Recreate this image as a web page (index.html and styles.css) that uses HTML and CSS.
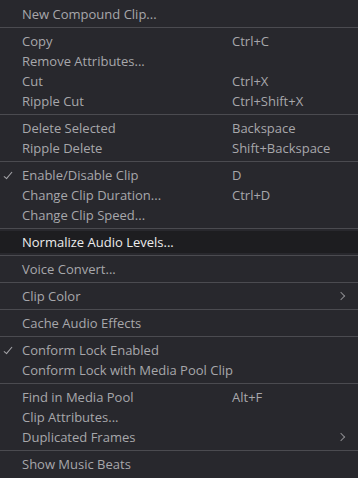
FILE: index.html
```html
<!DOCTYPE html>
<html lang="en">

<head>
    <meta charset="UTF-8">
    <meta name="viewport" content="width=device-width, initial-scale=1.0">
    <title>Clip Menu</title>
    <link rel="stylesheet" href="styles.css">
</head>

<body>
    <div class="menu">
        <div class="item"><span class="label">New Compound Clip...</span></div>
        <div class="sep"></div>
        <div class="item"><span class="label">Copy</span><span class="key">Ctrl+C</span></div>
        <div class="item"><span class="label">Remove Attributes...</span></div>
        <div class="item"><span class="label">Cut</span><span class="key">Ctrl+X</span></div>
        <div class="item"><span class="label">Ripple Cut</span><span class="key">Ctrl+Shift+X</span></div>
        <div class="sep"></div>
        <div class="item"><span class="label">Delete Selected</span><span class="key">Backspace</span></div>
        <div class="item"><span class="label">Ripple Delete</span><span class="key">Shift+Backspace</span></div>
        <div class="sep"></div>
        <div class="item checked"><span class="label">Enable/Disable Clip</span><span class="key">D</span></div>
        <div class="item"><span class="label">Change Clip Duration...</span><span class="key">Ctrl+D</span></div>
        <div class="item"><span class="label">Change Clip Speed...</span></div>
        <div class="sep"></div>
        <div class="item active"><span class="label">Normalize Audio Levels...</span></div>
        <div class="sep"></div>
        <div class="item"><span class="label">Voice Convert...</span></div>
        <div class="sep"></div>
        <div class="item sub"><span class="label">Clip Color</span></div>
        <div class="sep"></div>
        <div class="item"><span class="label">Cache Audio Effects</span></div>
        <div class="sep"></div>
        <div class="item checked"><span class="label">Conform Lock Enabled</span></div>
        <div class="item"><span class="label">Conform Lock with Media Pool Clip</span></div>
        <div class="sep"></div>
        <div class="item"><span class="label">Find in Media Pool</span><span class="key">Alt+F</span></div>
        <div class="item"><span class="label">Clip Attributes...</span></div>
        <div class="item sub"><span class="label">Duplicated Frames</span></div>
        <div class="sep"></div>
        <div class="item"><span class="label">Show Music Beats</span></div>
    </div>
</body>

</html>
```

FILE: styles.css
```css
body {
    margin: 0;
    background-color: #28282d;
    font-family: "Open Sans", "Noto Sans", sans-serif;
    font-size: 13px;
    color: #a7a7ab;
}

.menu {
    padding-top: 4px;
}

.item {
    position: relative;
    display: flex;
    align-items: center;
    height: 20px;
    padding-left: 22px;
}

.label {
    width: 210px;
    flex-shrink: 0;
    white-space: nowrap;
}

.key {
    white-space: nowrap;
}

.item.active {
    background-color: #1d1d20;
    color: #ececec;
    height: 22px;
    margin: -1px 0;
}

.item.checked::before {
    content: "";
    position: absolute;
    left: 6px;
    top: 5px;
    width: 3px;
    height: 8px;
    border-right: 1.5px solid #a7a7ab;
    border-bottom: 1.5px solid #a7a7ab;
    transform: rotate(40deg);
}

.item.sub::after {
    content: "";
    position: absolute;
    right: 14px;
    top: 7px;
    width: 5px;
    height: 5px;
    border-right: 1.5px solid #8a8a8e;
    border-top: 1.5px solid #8a8a8e;
    transform: rotate(45deg);
}

.sep {
    height: 1px;
    margin: 3px 0;
    background-color: #4b4b50;
}
```
